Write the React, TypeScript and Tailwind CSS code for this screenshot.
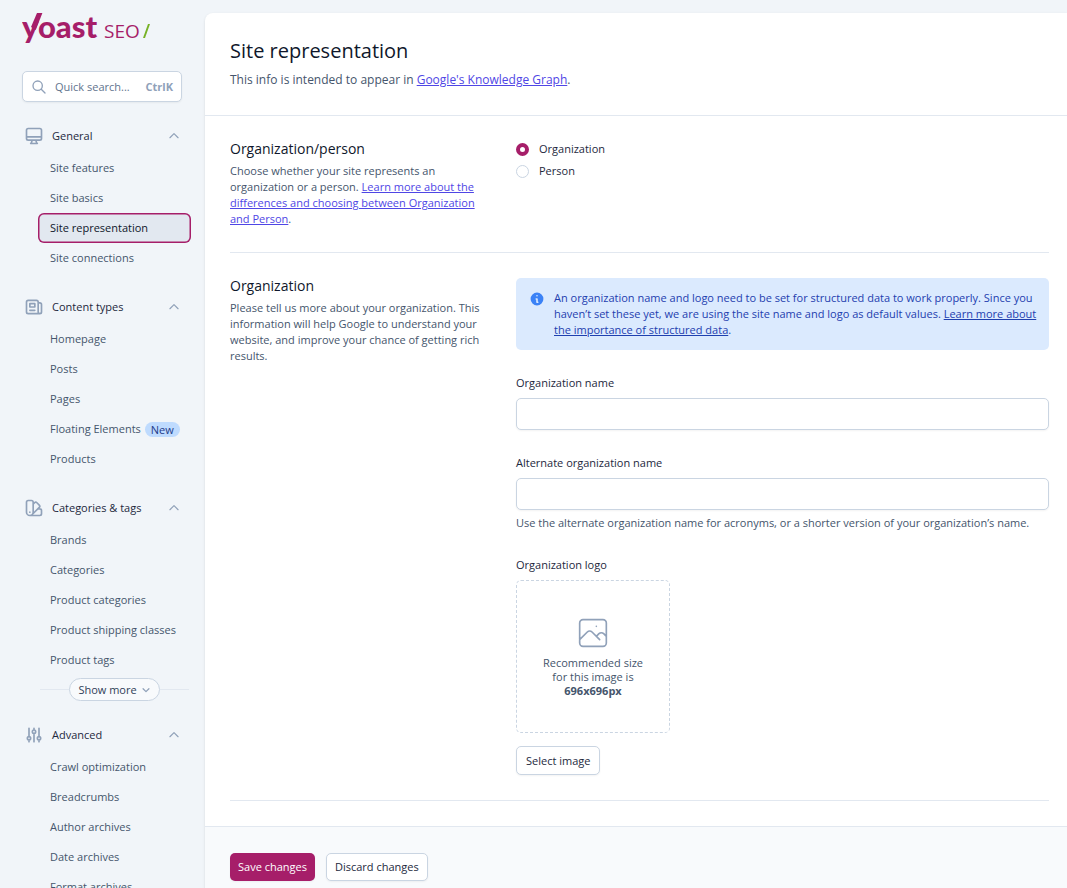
import { useState } from 'react'
import type { ReactNode } from 'react'
import clsx from 'clsx'
import { HiInformationCircle } from 'react-icons/hi'

type IconProps = { d: string[]; className?: string; strokeWidth?: number }

const Icon = ({ d, className, strokeWidth = 2 }: IconProps) => (
  <svg
    viewBox="0 0 24 24"
    fill="none"
    stroke="currentColor"
    strokeWidth={strokeWidth}
    strokeLinecap="round"
    strokeLinejoin="round"
    aria-hidden="true"
    className={clsx('shrink-0', className)}
  >
    {d.map((path) => (
      <path key={path} d={path} />
    ))}
  </svg>
)

const icons = {
  search: ['M21 21l-6-6m2-5a7 7 0 11-14 0 7 7 0 0114 0z'],
  desktop: ['M9.75 17L9 20l-1 1h8l-1-1-.75-3M3 13h18M5 17h14a2 2 0 002-2V5a2 2 0 00-2-2H5a2 2 0 00-2 2v10a2 2 0 002 2z'],
  newspaper: [
    'M19 20H5a2 2 0 01-2-2V6a2 2 0 012-2h10a2 2 0 012 2v1m2 13a2 2 0 01-2-2V7m2 13a2 2 0 002-2V9a2 2 0 00-2-2h-2m-4-3H9M7 16h6M7 8h6v4H7V8z',
  ],
  swatch: [
    'M7 21a4 4 0 01-4-4V5a2 2 0 012-2h4a2 2 0 012 2v12a4 4 0 01-4 4zm0 0h12a2 2 0 002-2v-4a2 2 0 00-2-2h-2.343M11 7.343l1.657-1.657a2 2 0 012.828 0l2.829 2.829a2 2 0 010 2.828l-8.486 8.485M7 17h.01',
  ],
  adjustments: [
    'M12 6V4m0 2a2 2 0 100 4m0-4a2 2 0 110 4m-6 8a2 2 0 100-4m0 4a2 2 0 110-4m0 4v2m0-6V4m6 6v10m6-2a2 2 0 100-4m0 4a2 2 0 110-4m0 4v2m0-6V4',
  ],
  photo: [
    'M4 16l4.586-4.586a2 2 0 012.828 0L16 16m-2-2l1.586-1.586a2 2 0 012.828 0L20 14m-6-6h.01M6 20h12a2 2 0 002-2V6a2 2 0 00-2-2H6a2 2 0 00-2 2v12a2 2 0 002 2z',
  ],
  up: ['M5 15l7-7 7 7'],
  down: ['M19 9l-7 7-7-7'],
}

const menu = [
  {
    title: 'General',
    icon: icons.desktop,
    items: ['Site features', 'Site basics', 'Site representation', 'Site connections'],
  },
  {
    title: 'Content types',
    icon: icons.newspaper,
    items: ['Homepage', 'Posts', 'Pages', 'Floating Elements', 'Products'],
  },
  {
    title: 'Categories & tags',
    icon: icons.swatch,
    items: ['Brands', 'Categories', 'Product categories', 'Product shipping classes', 'Product tags'],
    more: true,
  },
  {
    title: 'Advanced',
    icon: icons.adjustments,
    items: ['Crawl optimization', 'Breadcrumbs', 'Author archives', 'Date archives', 'Format archives'],
  },
]

const Logo = () => (
  <svg viewBox="0 0 130 42" className="block h-[42px] w-[130px]" role="img" aria-label="Yoast SEO">
    <g fill="#a61e69">
      <text x="0" y="32" fontSize="31" fontWeight="900" fontFamily="Lato, sans-serif">
        yoast
      </text>
      <text x="82" y="32" fontSize="19" fontFamily="Open Sans, sans-serif">
        SEO
      </text>
      <path d="M15 7H20.400L13.700 24L9 21z" />
    </g>
    <path d="M126 18H128L123 32H121z" fill="#77b227" />
  </svg>
)

const MenuGroup = ({ title, icon, items, more }: { title: string; icon: string[]; items: string[]; more?: boolean }) => {
  const [open, setOpen] = useState(true)

  return (
    <div>
      <button
        type="button"
        aria-expanded={open}
        onClick={() => setOpen(!open)}
        className="flex h-8 w-full items-center gap-2 pr-6 pl-6 text-slate-800"
      >
        <Icon d={icon} className="size-5 text-slate-400" />
        {title}
        <Icon d={open ? icons.up : icons.down} className="ml-auto size-3.5 text-slate-400" />
      </button>
      {open && (
        <ul className="mt-px pr-3.5 pl-[38px]">
          {items.map((item) => (
            <li key={item}>
              <a
                href="#"
                className={clsx(
                  'flex h-[30px] items-center gap-1 rounded-md px-3 whitespace-nowrap',
                  item === 'Site representation'
                    ? 'bg-slate-200 text-slate-900 ring-[1.5px] ring-[#a61e69] ring-inset'
                    : 'text-slate-600',
                )}
              >
                {item}
                {item === 'Floating Elements' && (
                  <span className="rounded-full bg-[#bfdbfe] px-1.5 leading-[15px] text-[#1e3a8a]">New</span>
                )}
              </a>
            </li>
          ))}
        </ul>
      )}
      {open && more && (
        <div className="mt-[3px] mr-4 ml-10 flex items-center">
          <span className="h-px flex-1 bg-slate-200" />
          <button
            type="button"
            className="flex h-[23px] items-center gap-1 rounded-full border border-slate-300 bg-slate-50 px-2 text-slate-700"
          >
            Show more
            <Icon d={icons.down} strokeWidth={3} className="size-2.5 text-slate-400" />
          </button>
          <span className="h-px flex-1 bg-slate-200" />
        </div>
      )}
    </div>
  )
}

const Sidebar = () => (
  <aside className="w-[205px] shrink-0 overflow-hidden pt-1.5">
    <div className="px-[22px]">
      <Logo />
      <button
        type="button"
        className="mt-[23px] flex h-[31px] w-40 items-center rounded-[5px] border border-slate-300 bg-white px-2 text-slate-500 shadow-xs"
      >
        <Icon d={icons.search} className="mr-2 size-4 text-slate-400" />
        Quick search...
        <kbd className="ml-auto font-[Open_Sans] font-bold text-slate-400">CtrlK</kbd>
      </button>
    </div>
    <nav className="mt-[18px] flex flex-col gap-[18px]">
      {menu.map((group) => (
        <MenuGroup key={group.title} {...group} />
      ))}
    </nav>
  </aside>
)

const Section = ({ title, description, children }: { title: string; description: ReactNode; children: ReactNode }) => (
  <section className="mr-[18px] ml-[25px] grid grid-cols-[254px_minmax(0,1fr)] gap-8 border-b border-slate-200 py-[25px]">
    <div>
      <h2 className="text-sm leading-4 text-slate-900">{title}</h2>
      <p className="mt-1.5 text-slate-600">{description}</p>
    </div>
    <div>{children}</div>
  </section>
)

const Link = ({ children, className = 'text-[#4f46e5]' }: { children: ReactNode; className?: string }) => (
  <a href="#" className={clsx('underline', className)}>
    {children}
  </a>
)

const TextField = ({ id, label, help }: { id: string; label: string; help?: string }) => (
  <div>
    <label htmlFor={id} className="block text-slate-800">
      {label}
    </label>
    <input
      id={id}
      type="text"
      className="mt-[7px] block h-8 w-full rounded-[5px] border border-slate-300 bg-white px-3 shadow-xs"
    />
    {help && <p className="mt-[5px] text-slate-600">{help}</p>}
  </div>
)

const App = () => {
  const [type, setType] = useState('Organization')

  return (
    <div className="flex h-screen overflow-hidden bg-slate-100 font-[Open_Sans,sans-serif] text-[11px] leading-4">
      <Sidebar />
      <main className="min-w-0 flex-1 pt-[13px]">
        <div className="rounded-tl-lg bg-white shadow-sm">
          <header className="border-b border-slate-200 p-[25px]">
            <h1 className="text-xl leading-[26px] text-slate-900">Site representation</h1>
            <p className="mt-1.5 text-xs leading-5 text-slate-600">
              This info is intended to appear in <Link>Google's Knowledge Graph</Link>.
            </p>
          </header>

          <Section
            title="Organization/person"
            description={
              <>
                Choose whether your site represents an organization or a person.{' '}
                <Link>Learn more about the differences and choosing between Organization and Person</Link>.
              </>
            }
          >
            <div className="flex flex-col gap-1.5">
              {['Organization', 'Person'].map((option) => (
                <label key={option} className="flex items-center gap-2.5 text-slate-800">
                  <input
                    type="radio"
                    name="company_or_person"
                    checked={type === option}
                    onChange={() => setType(option)}
                    className="size-[13px] appearance-none rounded-full border border-slate-300 bg-white checked:border-4 checked:border-[#a61e69]"
                  />
                  {option}
                </label>
              ))}
            </div>
          </Section>

          <Section
            title="Organization"
            description="Please tell us more about your organization. This information will help Google to understand your website, and improve your chance of getting rich results."
          >
            <div className="flex flex-col gap-[25px]">
              <div className="flex gap-[9px] rounded-[5px] bg-[#dbeafe] py-3 pr-1 pl-[13px] text-[#1e40af]">
                <HiInformationCircle className="mt-px size-4 shrink-0 text-[#3b82f6]" />
                <p>
                  An organization name and logo need to be set for structured data to work properly. Since you haven’t
                  set these yet, we are using the site name and logo as default values.{' '}
                  <Link className="text-[#1e40af]">Learn more about the importance of structured data</Link>.
                </p>
              </div>
              <TextField id="company_name" label="Organization name" />
              <TextField
                id="company_alternate_name"
                label="Alternate organization name"
                help="Use the alternate organization name for acronyms, or a shorter version of your organization’s name."
              />
              <div className="pt-px text-slate-800">
                <p>Organization logo</p>
                <button
                  type="button"
                  className="mt-[7px] flex h-[153px] w-[154px] flex-col items-center justify-center rounded-[5px] border border-dashed border-slate-300 px-6 pb-[3px] leading-[14px] text-slate-600"
                >
                  <Icon d={icons.photo} strokeWidth={1} className="mb-[3px] size-10 text-slate-400" />
                  <span>Recommended size for this image is</span>
                  <strong>696x696px</strong>
                </button>
                <button
                  type="button"
                  className="mt-[13px] h-[29px] rounded-[5px] border border-slate-300 bg-white px-[9px] shadow-xs"
                >
                  Select image
                </button>
              </div>
            </div>
          </Section>

          <footer className="mt-[25px] flex gap-[11px] border-t border-slate-200 bg-slate-50 px-[25px] py-[26px]">
            <button type="button" className="h-7 rounded-[5px] bg-[#a61e69] px-2 text-white shadow-xs">
              Save changes
            </button>
            <button
              type="button"
              className="h-7 rounded-[5px] border border-slate-300 bg-white px-2 text-slate-800 shadow-xs"
            >
              Discard changes
            </button>
          </footer>
        </div>
      </main>
    </div>
  )
}

export default App
